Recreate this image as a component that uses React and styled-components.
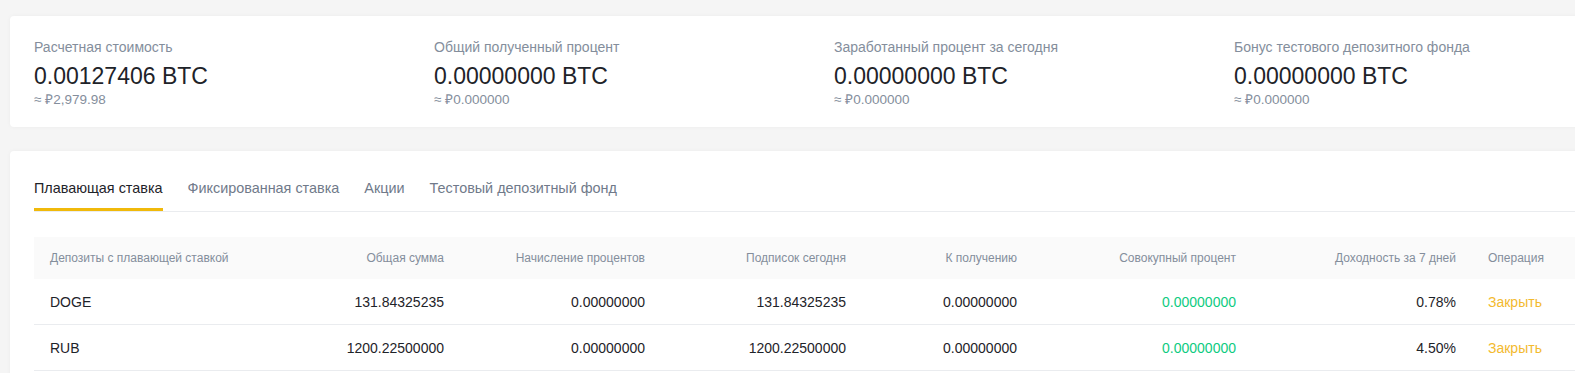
import React from 'react';
import styled, { createGlobalStyle } from 'styled-components';

const GlobalStyle = createGlobalStyle`
  html, body {
    margin: 0;
    padding: 0;
    background: #f5f5f5;
    overflow: hidden;
  }
  body {
    font-family: "Liberation Sans", Arial, sans-serif;
    color: #1e2329;
  }
`;

const Page = styled.div`
  width: 1640px;
  padding: 16px 0 0 10px;
  display: flex;
  flex-direction: column;
  gap: 24px;
`;

const Card = styled.div`
  background: #fff;
  border-radius: 4px;
  box-shadow: 0 0 4px rgba(0, 0, 0, 0.04);
  padding: ${({ pad }) => pad || '24px'};
`;

const SummaryGrid = styled.div`
  display: grid;
  grid-template-columns: repeat(4, 400px);
`;

const Stat = styled.div`
  display: flex;
  flex-direction: column;
`;

const StatLabel = styled.div`
  font-size: 14px;
  line-height: 20px;
  color: #848e9c;
  margin-bottom: 4px;
`;

const StatValue = styled.div`
  font-size: 23px;
  line-height: 30px;
  color: #1e2329;
`;

const StatSub = styled.div`
  font-size: 13.5px;
  line-height: 17px;
  color: #848e9c;
`;

const Tabs = styled.div`
  display: flex;
  gap: 25px;
  border-bottom: 1px solid #eaecef;
`;

const Tab = styled.div`
  font-size: 14.4px;
  line-height: 20px;
  padding: 8px 0 10px;
  color: ${({ active }) => (active ? '#1e2329' : '#707a8a')};
  border-bottom: 3px solid ${({ active }) => (active ? '#f0b90b' : 'transparent')};
`;

const Table = styled.div`
  margin-top: 25px;
  display: grid;
  grid-template-columns: 225px 201px 201px 201px 171px 219px 220px 300px;
`;

const HeadCell = styled.div`
  background: #fafafa;
  height: 42px;
  display: flex;
  align-items: center;
  justify-content: ${({ right }) => (right ? 'flex-end' : 'flex-start')};
  padding: 0 16px;
  font-size: 12px;
  color: #848e9c;
  white-space: nowrap;
`;

const Cell = styled.div`
  height: 45px;
  display: flex;
  align-items: center;
  justify-content: ${({ right }) => (right ? 'flex-end' : 'flex-start')};
  padding: 0 16px;
  font-size: 14px;
  border-bottom: 1px solid #eaecef;
  color: ${({ tone }) =>
    tone === 'green' ? '#0ecb81' : tone === 'link' ? '#f3ba2f' : '#1e2329'};
  white-space: nowrap;
`;

const stats = [
  ['Расчетная стоимость', '0.00127406 BTC', '≈ ₽2,979.98'],
  ['Общий полученный процент', '0.00000000 BTC', '≈ ₽0.000000'],
  ['Заработанный процент за сегодня', '0.00000000 BTC', '≈ ₽0.000000'],
  ['Бонус тестового депозитного фонда', '0.00000000 BTC', '≈ ₽0.000000'],
];

const tabs = ['Плавающая ставка', 'Фиксированная ставка', 'Акции', 'Тестовый депозитный фонд'];

const headers = [
  'Депозиты с плавающей ставкой',
  'Общая сумма',
  'Начисление процентов',
  'Подписок сегодня',
  'К получению',
  'Совокупный процент',
  'Доходность за 7 дней',
  'Операция',
];

const rows = [
  ['DOGE', '131.84325235', '0.00000000', '131.84325235', '0.00000000', '0.00000000', '0.78%'],
  ['RUB', '1200.22500000', '0.00000000', '1200.22500000', '0.00000000', '0.00000000', '4.50%'],
];

export default function App() {
  return (
    <>
      <GlobalStyle />
      <Page>
        <Card pad="21px 24px 19px">
          <SummaryGrid>
            {stats.map(([label, value, sub]) => (
              <Stat key={label}>
                <StatLabel>{label}</StatLabel>
                <StatValue>{value}</StatValue>
                <StatSub>{sub}</StatSub>
              </Stat>
            ))}
          </SummaryGrid>
        </Card>
        <Card pad="19px 24px 24px">
          <Tabs>
            {tabs.map((t, i) => (
              <Tab key={t} active={i === 0}>{t}</Tab>
            ))}
          </Tabs>
          <Table>
            {headers.map((h, i) => (
              <HeadCell key={h} right={i > 0 && i < 7}>{h}</HeadCell>
            ))}
            {rows.map((r) => (
              <React.Fragment key={r[0]}>
                {r.map((v, i) => (
                  <Cell key={i} right={i > 0} tone={i === 5 ? 'green' : undefined}>{v}</Cell>
                ))}
                <Cell tone="link">Закрыть</Cell>
              </React.Fragment>
            ))}
          </Table>
        </Card>
      </Page>
    </>
  );
}
